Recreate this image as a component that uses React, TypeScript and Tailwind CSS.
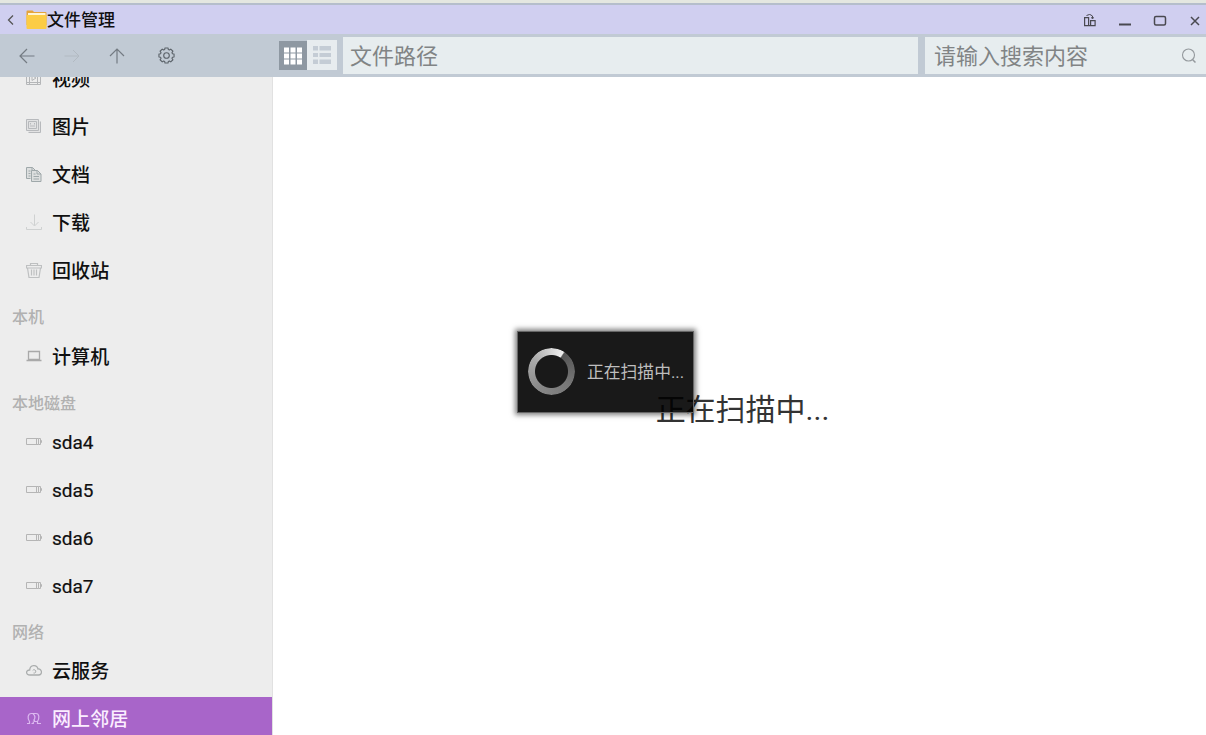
import React from "react";

type Kind = "video" | "image" | "doc" | "download" | "trash" | "computer" | "disk" | "cloud" | "network";

function SideIcon({ kind }: { kind: Kind }) {
  const tone: Record<Kind, string> = {
    video: "text-[#b4b6b8]",
    image: "text-[#b7babc]",
    doc: "text-[#9fa8aa]",
    download: "text-[#cfd1d1]",
    trash: "text-[#bec0c1]",
    computer: "text-[#a9a9a9]",
    disk: "text-[#b5b5b5]",
    cloud: "text-[#aaadad]",
    network: "text-[#dcb8f0]",
  };
  return (
    <svg viewBox="0 0 16 16" className={`size-4 shrink-0 ${tone[kind]}`} fill="none" stroke="currentColor" strokeWidth="1">
      {kind === "video" && (
        <path d="M.5 1.5h14v13H.5zM3.5 1.5v13M11.5 1.5v13M.5 12.5h14M6 5.5v5l4-2.5z" />
      )}
      {kind === "image" && (
        <>
          <path d="M.5 1.500h12v11H.5zM2.500 14.500h12v-11M2.500 3.500h8v7h-8z" />
          <path d="M4.500 5v1.500M8.500 5v1.500M4 8h5" />
          <path d="M.5 1.500h12v2h2v11h-12v-2h-2z" fill="currentColor" fillOpacity=".2" stroke="none" />
        </>
      )}
      {kind === "doc" && (
        <>
          <path d="M4.500 12.500h-4v-11h6l3 3M6 1.500v3h3M2.500 5h2M2.500 7.500h2M2.500 10h2" />
          <path d="M5.500 4.500h6l3.500 3.500v7.500H5.500zM11 4.500V8h4M7.500 8h2M7.500 10.500h5.500M7.500 13h5.500" />
          <path d="M.5 1.500h6l3 3h2L15 8v7.500H5.500v-3h-5z" fill="currentColor" fillOpacity=".2" stroke="none" />
        </>
      )}
      {kind === "download" && <path d="M8.500 .5v11M4.500 8l4 4 4-4M.5 13v2.500h15V13" />}
      {kind === "trash" && (
        <path
          d="M.5 6V3.500h15V6zM4.500 3.500v-2h7v2M1.500 6l1.500 9.500h10L14.500 6M5.500 7.500v6M8 7.500v6M10.500 7.500v6"
          strokeWidth="1.200"
        />
      )}
      {kind === "computer" && <path d="M2.500 3.500h11v8h-11zM.5 12.500h15" strokeWidth="1.300" />}
      {kind === "disk" && <path d="M.5 4.500h12v6H.5zM10.500 4.500v6M12.500 4.500h2v6h-2M14.500 6.500h1v2h-1" />}
      {kind === "cloud" && (
        <>
          <path d="M4 13C-.7 13-.3 7.700 3.700 8 4 2.700 10.800 2.200 12 7c4.200-.5 4.800 6 .5 6z" strokeWidth="1.300" />
          <path d="M6.700 8.500a1.700 1.700 0 1 1 .8 2.500" />
        </>
      )}
      {kind === "network" && (
        <path
          d="M1 13.500h2.500v-2C1.300 8.500 1.500 3.500 5.500 3.500h4.500c3.500 0 3.500 5 1.500 8v2H15M7 3.700c2.500 2 2 5 .5 7M5.500 13.500h1.800v-2M8.500 10v1.500h3"
          strokeWidth="1.200"
        />
      )}
    </svg>
  );
}

function Item({ kind, label, active }: { kind: Kind; label: string; active?: boolean }) {
  return (
    <div
      className={`flex h-[42px] shrink-0 items-center gap-[10px] pl-[26px] text-[19px] ${
        active ? "bg-[#a865c9] text-[#fbeeff]" : "text-[#101010]"
      }`}
    >
      <SideIcon kind={kind} />
      {kind === "disk" ? (
        <span className="whitespace-nowrap [-webkit-text-stroke:0.2px_currentColor]">{label}</span>
      ) : (
        <span className="whitespace-nowrap pt-0.5 font-medium tracking-[0.1px]">{label}</span>
      )}
    </div>
  );
}

function Section({ label, tall }: { label: string; tall?: boolean }) {
  return (
    <div
      className={`flex shrink-0 items-center pl-3 pt-[10px] text-[16px] font-medium text-[#b1b1b1] ${
        tall ? "h-11" : "h-[42px]"
      }`}
    >
      {label}
    </div>
  );
}

function Group({ children }: { children: React.ReactNode }) {
  return <div className="flex shrink-0 flex-col gap-1.5">{children}</div>;
}

function TitleBar() {
  return (
    <header className="flex h-[29px] shrink-0 items-center bg-[#d0cff0] text-[#444]">
      <svg viewBox="0 0 8 12" className="ml-[7px] h-3 w-2" fill="none" stroke="#555" strokeWidth="1.300">
        <path d="M6 1.500 1.500 6 6 10.500" />
      </svg>
      <svg viewBox="0 0 21 20" className="ml-[11px] h-5 w-[21px]">
        <path d="M.5 1.500Q.5.500 1.500.500h5l1.500 1.500h11.500q1 0 1 1V15H.5z" fill="#e5a43b" />
        <path d="M2 3h17.500v6H2z" fill="#fff5d4" />
        <path d="M.5 5h20v13q0 1-1 1h-18q-1 0-1-1z" fill="#fccc45" />
      </svg>
      <h1 className="pt-px text-[17px] font-medium text-[#101010]">文件管理</h1>
      <div className="ml-auto flex items-center pr-[5px] pt-0.5">
        <svg viewBox="0 0 14 14" className="size-[14px]" fill="none" stroke="#494950" strokeWidth="1.200">
          <path d="M1.600 3.600h4v8h-4zM5.600 11.600h6.500v-5h-4.500v5" />
          <path d="M3.500 1.500Q7-1 9.500 2v2.500L8 3.500M9.500 4.500 11 3.500" strokeWidth="1" />
        </svg>
        <svg viewBox="0 0 14 14" className="ml-[21px] size-[14px]" stroke="#494950" strokeWidth="2">
          <path d="M1 10.500h12" />
        </svg>
        <svg viewBox="0 0 14 14" className="ml-[21px] size-[14px]" fill="none" stroke="#494950" strokeWidth="1.500">
          <rect x="1.500" y="2.500" width="11" height="8.500" rx="1.500" />
        </svg>
        <svg viewBox="0 0 12 14" className="ml-[22px] h-[14px] w-3" stroke="#494950" strokeWidth="1.500">
          <path d="m2 3 8 8M10 3l-8 8" />
        </svg>
      </div>
    </header>
  );
}

const gearPath = (() => {
  const points: string[] = [];
  for (let i = 0; i < 8; i++) {
    const steps: [number, number][] = [[-0.3, 6.200], [-0.2, 7.700], [0.2, 7.700], [0.3, 6.200]];
    for (const [offset, radius] of steps) {
      const a = (i * Math.PI) / 4 + offset;
      points.push(`${(8.500 + radius * Math.cos(a)).toFixed(2)} ${(8.500 + radius * Math.sin(a)).toFixed(2)}`);
    }
  }
  return `M${points.join("L")}Z`;
})();

function Toolbar() {
  return (
    <div className="flex h-[43px] shrink-0 bg-[#c1cad4] pt-[3px]">
      <nav className="flex h-[37px] w-[279px] shrink-0 items-center pl-[19px]">
        <svg viewBox="0 0 16 16" className="size-4" fill="none" stroke="#747b83" strokeWidth="1.200">
          <path d="M15.500 8H1M8 1 1 8l7 7" />
        </svg>
        <svg viewBox="0 0 16 16" className="ml-[29px] size-4" fill="none" stroke="#b2bac2" strokeWidth="1">
          <path d="M.5 8H15M9 2l6 6-6 6" />
        </svg>
        <svg viewBox="0 0 16 16" className="ml-[29px] size-4" fill="none" stroke="#747b83" strokeWidth="1.200">
          <path d="M8 15.500V1M1 8l7-7 7 7" />
        </svg>
        <svg viewBox="0 0 17 17" className="ml-[33px] size-[17px]" fill="none" stroke="#5b6269" strokeWidth="1.100">
          <path d={gearPath} strokeLinejoin="round" />
          <circle cx="8.500" cy="8.500" r="2.800" />
        </svg>
      </nav>
      <div className="mt-[3px] flex h-[30px] shrink-0">
        <div className="mt-px flex h-[29px] w-7 items-center justify-center bg-[#8e98a2]">
          <svg viewBox="0 0 18 18" className="size-[18px]" fill="#fff">
            <path d="M0 .500h5v5H0zM6.500 .500h5v5h-5zM13 .500h5v5h-5zM0 6.500h5v5H0zM6.500 6.500h5v5h-5zM13 6.500h5v5h-5zM0 12.500h5v5H0zM6.500 12.500h5v5h-5zM13 12.500h5v5h-5z" />
          </svg>
        </div>
        <div className="flex w-[30px] items-center justify-center bg-[#e7ecef]">
          <svg viewBox="0 0 18 18" className="size-[18px]" fill="#c4ccd5">
            <path d="M0 0h5v4.500H0zM6.500 0H18v4.500H6.500zM0 7h5v4H0zM6.500 7H18v4H6.500zM0 13.500h5V18H0zM6.500 13.500H18V18H6.500z" />
          </svg>
        </div>
      </div>
      <div className="ml-1.5 flex h-[37px] w-[575px] items-center bg-[#e7edef] pl-[7px] pt-[3px] text-[22px] text-[#818485]">
        文件路径
      </div>
      <div className="ml-[7px] flex h-[37px] flex-1 items-center bg-[#e7edef] pl-[9px] text-[22px] text-[#818485]">
        <span className="pt-[3px]">请输入搜索内容</span>
        <svg viewBox="0 0 16 16" className="ml-auto mr-[9px] size-4" fill="none" stroke="#94999d" strokeWidth="1.100">
          <circle cx="7.500" cy="7" r="6" />
          <path d="m11.500 11.500 3 3" strokeWidth="1.500" />
        </svg>
      </div>
    </div>
  );
}

export default function App() {
  return (
    <div className="flex h-[735px] w-[1206px] flex-col overflow-hidden bg-white font-[Roboto,'Noto_Sans_CJK_SC',sans-serif] leading-none">
      <div className="h-[5px] shrink-0 border-b-2 border-[#b5becb] bg-[#e4e7e0]" />
      <TitleBar />
      <Toolbar />
      <div className="flex min-h-0 flex-1">
        <aside className="flex w-[273px] shrink-0 flex-col overflow-hidden border-r border-[#e1e1e1] bg-[#ededed]">
          <div className="-mt-5 flex shrink-0 flex-col">
            <Group>
              <Item kind="video" label="视频" />
              <Item kind="image" label="图片" />
              <Item kind="doc" label="文档" />
              <Item kind="download" label="下载" />
              <Item kind="trash" label="回收站" />
            </Group>
            <Section label="本机" tall />
            <Item kind="computer" label="计算机" />
            <Section label="本地磁盘" tall />
            <Group>
              <Item kind="disk" label="sda4" />
              <Item kind="disk" label="sda5" />
              <Item kind="disk" label="sda6" />
              <Item kind="disk" label="sda7" />
            </Group>
            <Section label="网络" />
            <Group>
              <Item kind="cloud" label="云服务" />
              <Item kind="network" label="网上邻居" active />
            </Group>
          </div>
        </aside>
        <main className="flex flex-1 items-center justify-center pb-0.5 pl-1.5">
          <p className="whitespace-nowrap pt-2.5 text-[30px] text-[#333]">正在扫描中...</p>
        </main>
      </div>
      <div
        role="status"
        className="absolute left-[517px] top-[331px] flex h-[82px] w-[177px] items-center border border-[#666] bg-black/90 bg-clip-border pl-2.5 shadow-[0_0_5px_2px_rgba(0,0,0,0.5)]"
      >
        <div className="mb-px size-[47px] shrink-0 rounded-full bg-[conic-gradient(from_35deg,#555,#777_25%,#888_50%,#aaa_75%,#eee_99%,#555)] [mask-image:radial-gradient(circle,transparent_16px,black_17px)]" />
        <span className="ml-3 whitespace-nowrap pt-px text-[16.800px] text-[#bebebe]">正在扫描中...</span>
      </div>
    </div>
  );
}
